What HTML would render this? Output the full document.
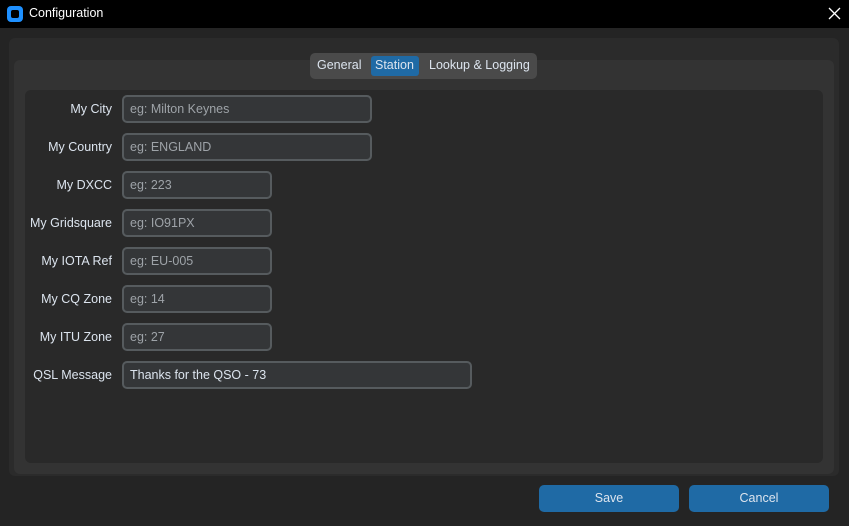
<!DOCTYPE html><html><head><style>
body{margin:0;width:849px;height:526px;background:#242424;font-family:"Liberation Sans",sans-serif;font-size:12.5px;color:#dce4ee;position:relative;overflow:hidden}
.a{position:absolute}
.tb{left:0;top:0;width:849px;height:28px;background:#000;color:#fff}
.e{position:absolute;left:122px;height:24px;border:2px solid #565b5e;border-radius:5px;background:#343638;box-sizing:content-box;line-height:24px;padding-left:6px;color:#9ea3a8}
.l{position:absolute;right:737px;text-align:right;line-height:28px;color:#dce4ee}
.btn{position:absolute;top:485px;height:27px;width:140px;background:#1f6aa5;border-radius:5px;text-align:center;line-height:27px;color:#dce4ee;font-size:12.5px}
</style></head><body>
<div class="a tb"><div class="a" style="left:7px;top:6px;width:16px;height:16px;background:#1e90ff;border-radius:4px"><div class="a" style="left:4px;top:4px;width:8px;height:8px;background:#000;border-radius:2px"></div></div><div class="a" style="left:29px;top:6px;font-size:12.5px">Configuration</div>
<svg class="a" style="left:828px;top:7px" width="13" height="13"><path d="M1 1L12 12M12 1L1 12" stroke="#fff" stroke-width="1.3"/></svg></div>
<div class="a" style="left:9px;top:38px;width:830px;height:438px;background:#2b2b2b;border-radius:6px"></div>
<div class="a" style="left:14px;top:60px;width:820px;height:414px;background:#333333;border-radius:6px"></div>
<div class="a" style="left:25px;top:90px;width:798px;height:373px;background:#292929;border-radius:6px"></div>
<div class="a" style="left:310px;top:53px;width:227px;height:26px;background:#4a4a4a;border-radius:5px"></div>
<div class="a" style="left:371px;top:56px;width:48px;height:20px;background:#1f6aa5;border-radius:3px"></div>
<div class="a" style="left:317px;top:58px">General</div>
<div class="a" style="left:375px;top:58px">Station</div>
<div class="a" style="left:429px;top:58px">Lookup &amp; Logging</div>

<div class="l" style="top:95px">My City</div><div class="e" style="top:95px;width:240px">eg: Milton Keynes</div>
<div class="l" style="top:133px">My Country</div><div class="e" style="top:133px;width:240px">eg: ENGLAND</div>
<div class="l" style="top:171px">My DXCC</div><div class="e" style="top:171px;width:140px">eg: 223</div>
<div class="l" style="top:209px">My Gridsquare</div><div class="e" style="top:209px;width:140px">eg: IO91PX</div>
<div class="l" style="top:247px">My IOTA Ref</div><div class="e" style="top:247px;width:140px">eg: EU-005</div>
<div class="l" style="top:285px">My CQ Zone</div><div class="e" style="top:285px;width:140px">eg: 14</div>
<div class="l" style="top:323px">My ITU Zone</div><div class="e" style="top:323px;width:140px">eg: 27</div>
<div class="l" style="top:361px">QSL Message</div><div class="e" style="top:361px;width:340px;color:#dce4ee">Thanks for the QSO - 73</div>

<div class="btn" style="left:539px">Save</div>
<div class="btn" style="left:689px">Cancel</div>
</body></html>
